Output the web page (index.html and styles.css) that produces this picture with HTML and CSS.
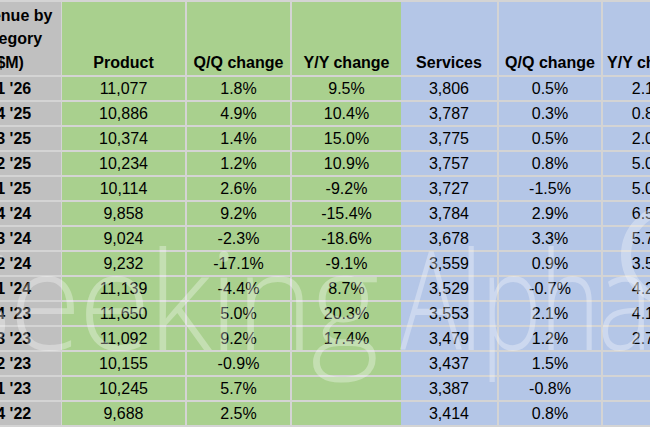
FILE: index.html
```html
<!DOCTYPE html>
<html>
<head>
<meta charset="utf-8">
<link rel="stylesheet" href="styles.css">
</head>
<body>
<div class="sheet">
  <div class="grid">
    <div class="hd c-lab">Revenue by<br>Category<br>($M)</div>
    <div class="hd c-p">Product</div>
    <div class="hd c-p">Q/Q change</div>
    <div class="hd c-p nb">Y/Y change</div>
    <div class="hd c-s">Services</div>
    <div class="hd c-s">Q/Q change</div>
    <div class="hd c-s">Y/Y change</div>

    <div class="lab">Q1 '26</div><div class="p">11,077</div><div class="p">1.8%</div><div class="p nb">9.5%</div><div class="s">3,806</div><div class="s">0.5%</div><div class="s">2.1%</div>
    <div class="lab">Q4 '25</div><div class="p">10,886</div><div class="p">4.9%</div><div class="p nb">10.4%</div><div class="s">3,787</div><div class="s">0.3%</div><div class="s">0.8%</div>
    <div class="lab">Q3 '25</div><div class="p">10,374</div><div class="p">1.4%</div><div class="p nb">15.0%</div><div class="s">3,775</div><div class="s">0.5%</div><div class="s">2.0%</div>
    <div class="lab">Q2 '25</div><div class="p">10,234</div><div class="p">1.2%</div><div class="p nb">10.9%</div><div class="s">3,757</div><div class="s">0.8%</div><div class="s">5.0%</div>
    <div class="lab">Q1 '25</div><div class="p">10,114</div><div class="p">2.6%</div><div class="p nb">-9.2%</div><div class="s">3,727</div><div class="s">-1.5%</div><div class="s">5.0%</div>
    <div class="lab">Q4 '24</div><div class="p">9,858</div><div class="p">9.2%</div><div class="p nb">-15.4%</div><div class="s">3,784</div><div class="s">2.9%</div><div class="s">6.5%</div>
    <div class="lab">Q3 '24</div><div class="p">9,024</div><div class="p">-2.3%</div><div class="p nb">-18.6%</div><div class="s">3,678</div><div class="s">3.3%</div><div class="s">5.7%</div>
    <div class="lab">Q2 '24</div><div class="p">9,232</div><div class="p">-17.1%</div><div class="p nb">-9.1%</div><div class="s">3,559</div><div class="s">0.9%</div><div class="s">3.5%</div>
    <div class="lab">Q1 '24</div><div class="p">11,139</div><div class="p">-4.4%</div><div class="p nb">8.7%</div><div class="s">3,529</div><div class="s">-0.7%</div><div class="s">4.2%</div>
    <div class="lab">Q4 '23</div><div class="p">11,650</div><div class="p">5.0%</div><div class="p nb">20.3%</div><div class="s">3,553</div><div class="s">2.1%</div><div class="s">4.1%</div>
    <div class="lab">Q3 '23</div><div class="p">11,092</div><div class="p">9.2%</div><div class="p nb">17.4%</div><div class="s">3,479</div><div class="s">1.2%</div><div class="s">2.7%</div>
    <div class="lab">Q2 '23</div><div class="p">10,155</div><div class="p">-0.9%</div><div class="p nb"></div><div class="s">3,437</div><div class="s">1.5%</div><div class="s"></div>
    <div class="lab">Q1 '23</div><div class="p">10,245</div><div class="p">5.7%</div><div class="p nb"></div><div class="s">3,387</div><div class="s">-0.8%</div><div class="s"></div>
    <div class="lab">Q4 '22</div><div class="p">9,688</div><div class="p">2.5%</div><div class="p nb"></div><div class="s">3,414</div><div class="s">0.8%</div><div class="s"></div>
  </div>
  <div class="watermark">Seeking<span class="wm-alpha">Alpha</span></div>
  <svg class="wm-logo" width="120" height="120" viewBox="0 0 120 120"><circle cx="60" cy="60" r="46" fill="none" stroke="#fff" stroke-width="10"/></svg>
</div>
</body>
</html>
```
FILE: styles.css
```css
html, body {
  margin: 0;
  padding: 0;
  background: #ffffff;
}
body {
  width: 650px;
  height: 427px;
  overflow: hidden;
}
.sheet {
  position: relative;
  width: 650px;
  height: 427px;
  overflow: hidden;
}
.grid {
  display: grid;
  grid-template-columns: 108px 125px 105px 109px 98px 104px 96px;
  grid-template-rows: 77px repeat(14, 25px);
  margin-left: -46px;
  width: 745px;
  font-family: "Liberation Sans", Arial, sans-serif;
  font-size: 16px;
  color: #000;
}
.grid > div {
  box-sizing: border-box;
  border-right: 2px solid #d4d4d4;
  border-bottom: 2px solid #d4d4d4;
  text-align: center;
  line-height: 23px;
  white-space: nowrap;
}
.grid > div:first-child,
.grid > .lab {
  width: 109px;
}
.grid > .nb {
  border-right: none;
}
.hd {
  border-top: 2px solid #d4d4d4;
  font-weight: bold;
  display: flex;
  align-items: flex-end;
  justify-content: center;
  padding-bottom: 1px;
}
.grid > .hd {
  line-height: 23.5px;
}
.c-lab, .lab {
  background: #c0c0c0;
}
.lab {
  font-weight: bold;
}
.c-p, .p {
  background: #a9d08e;
}
.c-s, .s {
  background: #b4c6e7;
}
.watermark {
  position: absolute;
  left: -60px;
  top: 233px;
  font-family: "Open Sans", "Liberation Sans", sans-serif;
  font-weight: 300;
  font-size: 132px;
  line-height: 132px;
  letter-spacing: -3px;
  color: rgba(255, 255, 255, 0.32);
  white-space: nowrap;
  pointer-events: none;
  transform-origin: 0 117px;
  transform: scaleY(1.03);
}
.wm-alpha {
  display: inline-block;
  margin-left: 24px;
  transform-origin: 0 50%;
  transform: scaleX(0.78);
}
.wm-logo {
  position: absolute;
  left: 612px;
  top: 195px;
  opacity: 0.3;
}
```
